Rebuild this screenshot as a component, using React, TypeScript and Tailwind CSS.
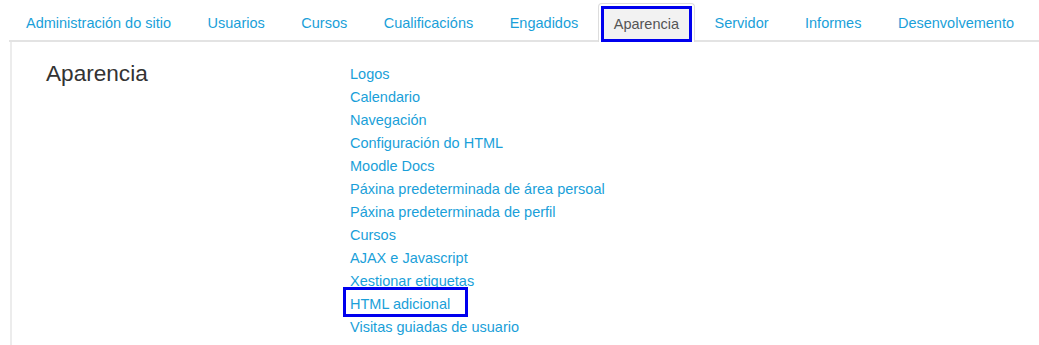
import React from 'react';

const tabs = [
  'Administración do sitio',
  'Usuarios',
  'Cursos',
  'Cualificacións',
  'Engadidos',
  'Aparencia',
  'Servidor',
  'Informes',
  'Desenvolvemento',
];

const links = [
  'Logos',
  'Calendario',
  'Navegación',
  'Configuración do HTML',
  'Moodle Docs',
  'Páxina predeterminada de área persoal',
  'Páxina predeterminada de perfil',
  'Cursos',
  'AJAX e Javascript',
  'Xestionar etiquetas',
  'HTML adicional',
  'Visitas guiadas de usuario',
];

export default function App() {
  return (
    <div className="w-[1039px] h-[345px] bg-white overflow-hidden font-['Liberation_Sans',Arial,sans-serif] text-[14.5px]">
      {/* Tabs */}
      <div className="flex items-end h-[42px] pl-[9px]">
        <ul className="flex items-end w-full border-b-2 border-[#e3e3e3] h-[42px]">
          {tabs.map(t => {
            const active = t === 'Aparencia';
            return (
              <li key={t} className="mr-[2.5px] -mb-[2px]">
                {active ? (
                  <div className="h-[39px] border border-b-0 border-[#dddddd] rounded-t-[4px] bg-white p-[2px] pb-0">
                    <div className="h-[36px] border-[3px] border-[#0000ee] bg-[#f2f2f2] px-[10px] pt-[1px] flex items-center text-[#555555]">
                      {t}
                    </div>
                  </div>
                ) : (
                  <a className="h-[39px] px-4 pt-[2px] flex items-center text-[#1a9fd9] border border-transparent">
                    {t}
                  </a>
                )}
              </li>
            );
          })}
        </ul>
      </div>

      {/* Content */}
      <div className="ml-[10px] border-l-2 border-[#ececec] h-[303px] flex">
        <h2 className="w-[336px] pl-[34px] pt-[17px] text-[22.6px] leading-[30px] text-[#333333]">
          Aparencia
        </h2>
        <ul className="pt-[21px] pl-[2px]">
          {links.map(l => (
            <li key={l} className="relative leading-[23px] h-[23px]">
              <a className="text-[#1a9fd9]">{l}</a>
              {l === 'HTML adicional' && (
                <span className="absolute -left-[7px] -top-[6px] w-[125px] h-[30px] border-[3px] border-[#0000ee]" />
              )}
            </li>
          ))}
        </ul>
      </div>
    </div>
  );
}
